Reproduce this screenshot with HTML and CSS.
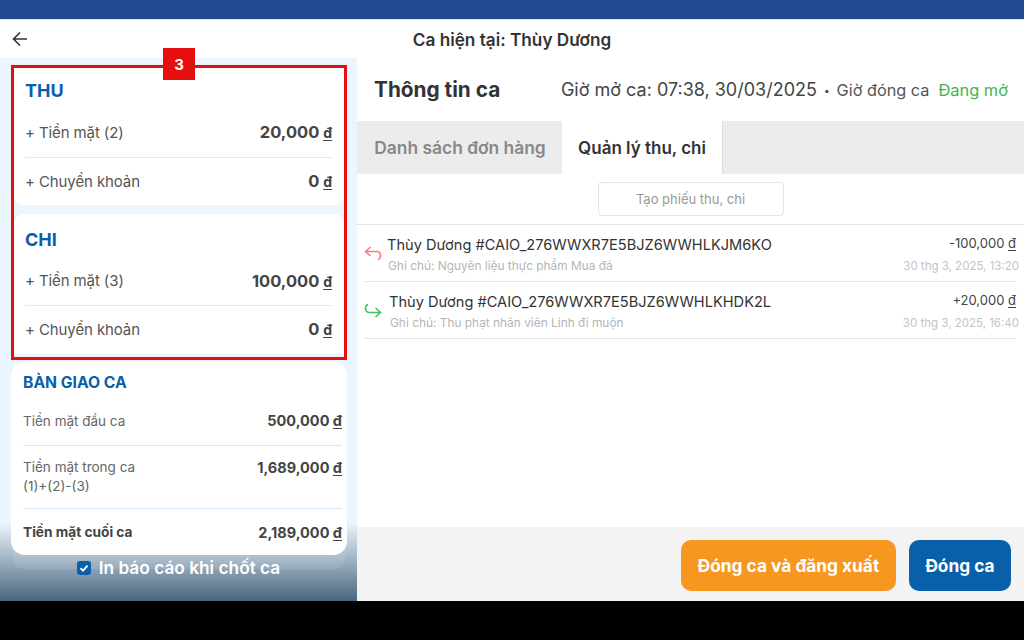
FILE: index.html
```html
<!DOCTYPE html>
<html lang="vi">

<head>
    <meta charset="UTF-8">
    <meta name="viewport" content="width=device-width, initial-scale=1.0">
    <title>Ca hiện tại</title>
    <link rel="stylesheet" href="styles.css">
</head>

<body>
    <div class="status-bar"></div>

    <header class="top-bar">
        <svg class="back-icon" width="18" height="18" viewBox="0 0 18 18" fill="none" stroke="#333" stroke-width="1.6">
            <path d="M16 9H2.5M9 2.5L2.5 9L9 15.5" />
        </svg>
        <h1>Ca hiện tại: Thùy Dương</h1>
    </header>

    <main class="content">
        <aside class="side">
            <div class="highlight">
                <span class="highlight-badge">3</span>
                <section class="card">
                    <h2>THU</h2>
                    <div class="sum-row">
                        <span>+ Tiền mặt (2)</span>
                        <b>20,000 <u>đ</u></b>
                    </div>
                    <div class="sum-row">
                        <span>+ Chuyển khoản</span>
                        <b>0 <u>đ</u></b>
                    </div>
                </section>
                <section class="card">
                    <h2>CHI</h2>
                    <div class="sum-row">
                        <span>+ Tiền mặt (3)</span>
                        <b>100,000 <u>đ</u></b>
                    </div>
                    <div class="sum-row">
                        <span>+ Chuyển khoản</span>
                        <b>0 <u>đ</u></b>
                    </div>
                </section>
            </div>

            <section class="handover">
                <h2>BÀN GIAO CA</h2>
                <div class="handover-row">
                    <span>Tiền mặt đầu ca</span>
                    <b>500,000 <u>đ</u></b>
                </div>
                <div class="handover-row handover-tall">
                    <span>Tiền mặt trong ca<br>(1)+(2)-(3)</span>
                    <b>1,689,000 <u>đ</u></b>
                </div>
                <div class="handover-row handover-total">
                    <span>Tiền mặt cuối ca</span>
                    <b>2,189,000 <u>đ</u></b>
                </div>
            </section>

            <label class="print-check">
                <span class="check-box">
                    <svg width="10" height="10" viewBox="0 0 10 10" fill="none" stroke="#fff" stroke-width="1.8">
                        <path d="M1.5 5.2L4 7.6L8.5 2.6" />
                    </svg>
                </span>
                In báo cáo khi chốt ca
            </label>
        </aside>

        <section class="detail">
            <div class="detail-head">
                <h2>Thông tin ca</h2>
                <div class="shift-info">
                    <span class="shift-open">Giờ mở ca: 07:38, 30/03/2025</span>
                    <span class="shift-dot">•</span>
                    <span class="shift-close">Giờ đóng ca</span>
                    <span class="shift-state">Đang mở</span>
                </div>
            </div>

            <nav class="tabs">
                <a class="tab">Danh sách đơn hàng</a>
                <a class="tab tab-active">Quản lý thu, chi</a>
            </nav>

            <div class="create-row">
                <button class="create-btn" type="button">Tạo phiếu thu, chi</button>
            </div>

            <ul class="entries">
                <li class="entry">
                    <svg class="entry-icon" width="18" height="18" viewBox="0 0 18 18" fill="none" stroke="#f47f7f" stroke-width="1.6">
                        <path d="M6.5 3L1.5 7.5L6.5 12M1.5 7.5H12.5C15 7.5 16.5 9.2 16.5 11.5C16.5 13.5 15.5 15 14 15.5" />
                    </svg>
                    <div class="entry-main">
                        <div class="entry-title">Thùy Dương #CAIO_276WWXR7E5BJZ6WWHLKJM6KO</div>
                        <div class="entry-note">Ghi chú: Nguyên liệu thực phẩm Mua đá</div>
                    </div>
                    <div class="entry-side">
                        <div class="entry-amount">-100,000 <u>đ</u></div>
                        <div class="entry-time">30 thg 3, 2025, 13:20</div>
                    </div>
                </li>
                <li class="entry">
                    <svg class="entry-icon entry-icon-in" width="18" height="18" viewBox="0 0 18 18" fill="none" stroke="#3cc45c" stroke-width="1.6">
                        <path d="M11.5 7L16.5 11.5L11.5 16M16.5 11.5H5.5C3 11.5 1.5 9.8 1.5 7.5C1.5 5.5 2.5 4 4 3.5" />
                    </svg>
                    <div class="entry-main">
                        <div class="entry-title">Thùy Dương #CAIO_276WWXR7E5BJZ6WWHLKHDK2L</div>
                        <div class="entry-note">Ghi chú: Thu phạt nhân viên Linh đi muộn</div>
                    </div>
                    <div class="entry-side">
                        <div class="entry-amount">+20,000 <u>đ</u></div>
                        <div class="entry-time">30 thg 3, 2025, 16:40</div>
                    </div>
                </li>
            </ul>

            <div class="actions">
                <button class="btn btn-orange" type="button">Đóng ca và đăng xuất</button>
                <button class="btn btn-blue" type="button">Đóng ca</button>
            </div>
        </section>
    </main>

    <div class="bottom-bar"></div>
</body>

</html>
```

FILE: styles.css
```css
* {
    box-sizing: border-box;
}

body {
    margin: 0;
    width: 1024px;
    height: 640px;
    overflow: hidden;
    display: flex;
    flex-direction: column;
    background-color: #000;
    color: #333;
    font-family: Inter, "Noto Sans", sans-serif;
}

h1,
h2 {
    margin: 0;
}

u {
    text-decoration-thickness: 1px;
    text-underline-offset: 2px;
}

.status-bar {
    height: 19px;
    background-color: #214b90;
}

.top-bar {
    height: 39px;
    display: flex;
    align-items: center;
    justify-content: center;
    position: relative;
    background-color: #fff;
    border-top: 1px solid #dce8f5;
}

.top-bar h1 {
    font-size: 17.2px;
    font-weight: 600;
    color: #333;
}

.back-icon {
    position: absolute;
    left: 11px;
    top: 10px;
}

.content {
    height: 543px;
    display: flex;
}

/* left column */
.side {
    width: 357px;
    padding: 7px 0 0 11px;
    position: relative;
    background: linear-gradient(to bottom, #ebf5fd 0, #ebf5fd 465px, #4a667f 543px);
}

/* faint panel behind the checkbox */
.side::before {
    content: "";
    position: absolute;
    left: 13px;
    width: 332px;
    top: 470px;
    height: 41px;
    background-color: rgba(255, 255, 255, 0.1);
    border-radius: 10px;
}

.highlight {
    width: 336px;
    height: 295px;
    position: relative;
    display: flex;
    flex-direction: column;
    gap: 9px;
    border: 3px solid #e60f0f;
}

.highlight-badge {
    position: absolute;
    left: 149px;
    top: -20px;
    width: 32px;
    height: 32px;
    display: flex;
    align-items: center;
    justify-content: center;
    background-color: #e60f0f;
    color: #fff;
    font-size: 15px;
    font-weight: 700;
}

.card {
    height: 137px;
    padding: 12px 12px 0 11px;
    background-color: #fff;
    border-radius: 0 0 10px 10px;
}

.card + .card {
    height: 140px;
    padding-top: 15px;
    border-radius: 10px 10px 0 0;
}

.card h2 {
    height: 22px;
    font-size: 18px;
    line-height: 22px;
    font-weight: 700;
    color: #0a60a8;
}

.sum-row {
    height: 46px;
    display: flex;
    align-items: center;
    justify-content: space-between;
    font-size: 15px;
    letter-spacing: -0.1px;
    color: #555;
}

.card h2 + .sum-row {
    height: 53px;
    margin-top: 3px;
    padding-top: 2px;
    border-bottom: 1px solid #e3ebf2;
}

.card + .card h2 + .sum-row {
    margin-top: 2px;
    padding-top: 3px;
}

.sum-row b {
    font-size: 16.5px;
    letter-spacing: 0;
    font-weight: 700;
    color: #444;
}

.sum-row u {
    font-size: 14px;
}

.handover {
    position: relative;
    width: 336px;
    height: 193px;
    margin-top: 2px;
    padding: 10px 5px 0 12px;
    background-color: #fff;
    border-radius: 14px;
}

.handover h2 {
    height: 21px;
    font-size: 15.7px;
    line-height: 21px;
    font-weight: 700;
    color: #0a60a8;
}

.handover-row {
    height: 51px;
    margin-top: 2px;
    padding-top: 1px;
    display: flex;
    align-items: center;
    justify-content: space-between;
    font-size: 13.5px;
    color: #666;
    border-bottom: 1px solid #d8e7f5;
}

.handover-row b {
    font-size: 14.5px;
    font-weight: 700;
    color: #444;
}

.handover-tall {
    height: 63px;
    margin-top: 0;
    align-items: flex-start;
    padding-top: 12px;
    line-height: 19px;
}

.handover-total {
    height: 45px;
    margin-top: 0;
    border-bottom: none;
}

.handover-total span {
    font-size: 13.7px;
    font-weight: 700;
    color: #444;
}

.print-check {
    position: relative;
    margin-top: 2px;
    display: flex;
    align-items: center;
    justify-content: center;
    gap: 8px;
    padding-right: 11px;
    color: #fff;
    font-size: 17.3px;
    font-weight: 600;
}

.check-box {
    width: 14px;
    height: 14px;
    display: flex;
    align-items: center;
    justify-content: center;
    background-color: #0a60a8;
    border-radius: 3px;
}

/* right column */
.detail {
    flex: 1;
    display: flex;
    flex-direction: column;
    background-color: #fff;
}

.detail-head {
    height: 63px;
    display: flex;
    align-items: center;
    justify-content: space-between;
    padding: 0 16px 0 17px;
}

.detail-head h2 {
    font-size: 20.8px;
    font-weight: 700;
    color: #333;
}

.shift-info {
    display: flex;
    align-items: center;
    font-size: 18px;
    color: #444;
}

.shift-dot {
    margin: 0 7px;
    font-size: 10px;
}

.shift-close {
    font-size: 16.3px;
    color: #555;
}

.shift-state {
    margin-left: 9px;
    font-size: 16.4px;
    color: #3eb54f;
}

.tabs {
    height: 53px;
    display: flex;
    background-color: #ececec;
}

.tab {
    width: 204px;
    margin-left: 1px;
    display: flex;
    align-items: center;
    justify-content: center;
    font-size: 17.4px;
    font-weight: 600;
    color: #888;
}

.tab-active {
    width: 161px;
    margin-left: 0;
    font-size: 17px;
    color: #333;
    background-color: #fff;
    border-right: 1px solid #ddd;
}

.create-row {
    height: 51px;
    display: flex;
    justify-content: center;
    align-items: flex-start;
    padding-top: 8px;
    border-bottom: 1px solid #e2e2e2;
}

.create-btn {
    width: 186px;
    height: 34px;
    font-family: inherit;
    font-size: 13px;
    color: #999;
    background-color: #fff;
    border: 1px solid #e4e4e4;
    border-radius: 4px;
}

.entries {
    flex: 1;
    margin: 0;
    padding: 0 8px 0 7px;
    list-style: none;
}

.entry {
    height: 57px;
    display: flex;
    align-items: center;
    border-bottom: 1px solid #e4e4e4;
}

.entry-icon {
    flex: none;
    margin-top: 0;
    margin-right: 5px;
}

.entry-icon-in {
    margin-right: 7px;
}

.entry-main {
    flex: 1;
    padding-top: 3px;
}

.entry-title {
    font-size: 14.6px;
    color: #333;
}

.entry-note {
    margin-top: 4px;
    padding-left: 1px;
    font-size: 11.9px;
    color: #b5b5b5;
}

.entry-side {
    text-align: right;
    margin-right: -3px;
    padding-top: 2px;
}

.entry-amount {
    margin-right: 3px;
    font-size: 13px;
    color: #444;
}

.entry-time {
    margin-top: 8px;
    font-size: 11.5px;
    color: #c4c4c4;
}

.actions {
    height: 74px;
    display: flex;
    justify-content: flex-end;
    align-items: flex-start;
    gap: 13px;
    padding: 13px 13px 0 0;
    background-color: #f3f3f3;
}

.btn {
    height: 51px;
    border: none;
    border-radius: 10px;
    font-family: inherit;
    font-size: 17.3px;
    font-weight: 700;
    color: #fff;
}

.btn-orange {
    width: 215px;
    background-color: #f89720;
}

.btn-blue {
    width: 102px;
    background-color: #0760a9;
}

.bottom-bar {
    flex: 1;
    background-color: #000;
}
```
